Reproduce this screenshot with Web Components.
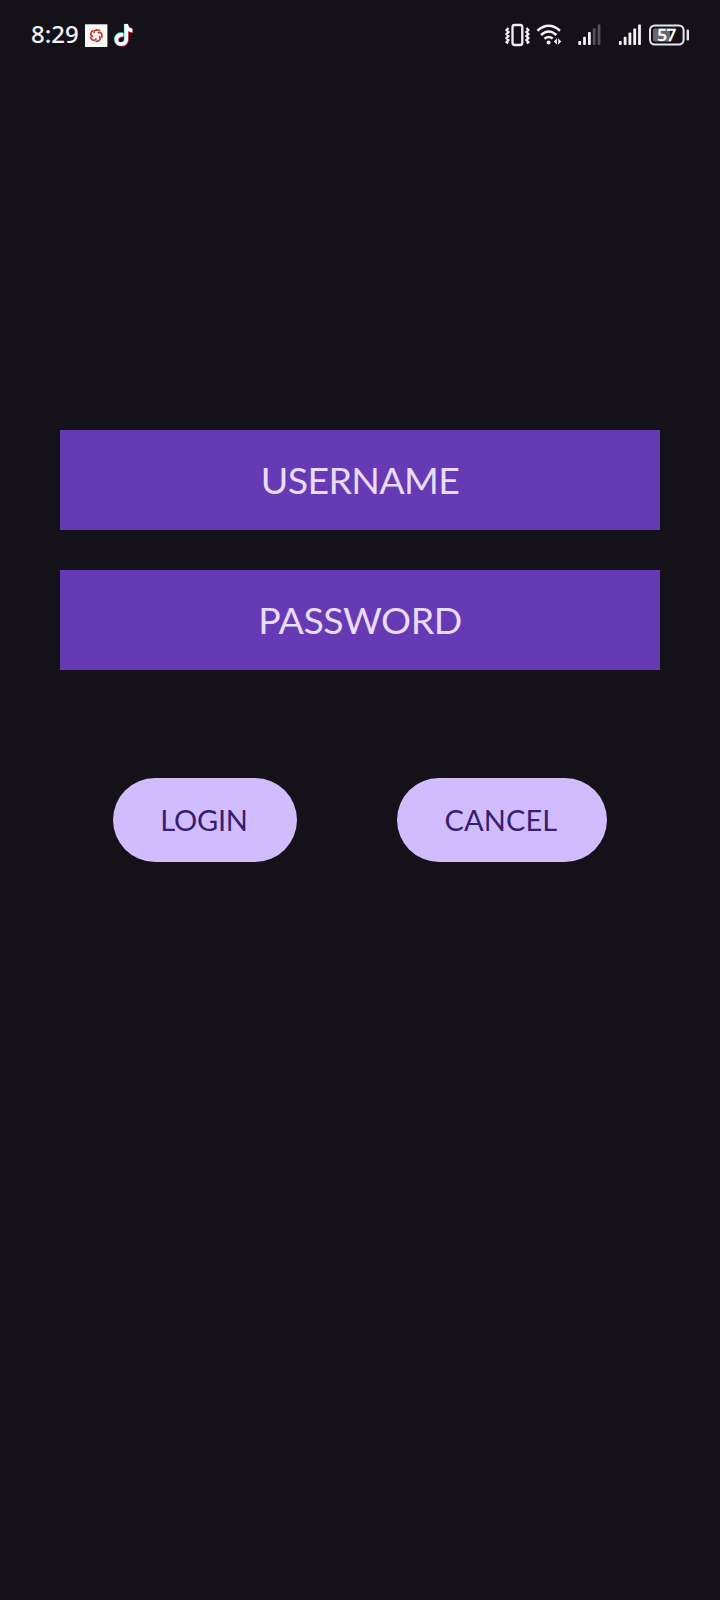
<!DOCTYPE html>
<html lang="en">
<head>
<meta charset="utf-8">
<title>Login</title>
<style>
html,body{margin:0;background:#141118}
</style>
</head>
<body>
<login-screen></login-screen>
<script>
const define = (name, markup) => {
  const t = document.createElement('template');
  t.innerHTML = markup;
  customElements.define(name, class extends HTMLElement {
    constructor() {
      super();
      this.attachShadow({mode: 'open'}).append(t.content.cloneNode(true));
    }
  });
};

define('status-clock', `<style>
:host{display:block;width:53px;padding-bottom:2px;font:500 24px/28px "Noto Sans",sans-serif;color:#f3f1f5;white-space:nowrap}
</style><slot></slot>`);

define('notification-icons', `<style>:host{display:block;height:30px}svg{display:block}</style>
<svg width="54" height="30" viewBox="84 20 54 30">
<rect x="85" y="24.3" width="22.4" height="22.7" fill="#fdfafa"/>
<g fill="none" stroke="#c23a35" stroke-width="1.7">
<path id="petal" d="M94.2 33.2q-.3-3.2 2.6-3.4q2.2 0 3.4 1.4"/>
<use href="#petal" transform="rotate(72 96.2 35.5)"/><use href="#petal" transform="rotate(144 96.2 35.5)"/>
<use href="#petal" transform="rotate(216 96.2 35.5)"/><use href="#petal" transform="rotate(288 96.2 35.5)"/></g>
<g fill="none" stroke-width="3.5">
<path stroke="#39dfdf" d="M122.6 34.1c-4-.6-6.9 1.6-6.9 4.9s2.5 4.8 4.9 4.8c3 0 5-2 5-5V24c.3 3.5 2.5 5.7 6 6"/>
<path stroke="#f33b62" d="M124 35.5c-4-.6-6.9 1.6-6.9 4.9s2.5 4.4 4.9 4.4c3 0 5-2 5-5V25.3c.3 3.5 2.5 5.7 6 6"/>
<path stroke="#fff" d="M123.3 34.8c-4-.6-6.9 1.6-6.9 4.9s2.5 4.4 4.9 4.4c3 0 5-2 5-5V24.1c.3 3.7 2.5 6 6 6.3"/>
</g></svg>`);

define('vibrate-icon', `<style>:host{display:block}svg{display:block}</style>
<svg width="28" height="30" viewBox="504 20 28 30" fill="none" stroke="#f3f1f5">
<rect x="512.5" y="25" width="9.8" height="20" rx="2.2" stroke-width="2.3"/>
<path stroke-width="2.2" d="M508.5 28l-2 2.1 2 2-2 2 2 2-2 2 2 2-2 2 1.6 1.4M526.4 28l2 2.1-2 2 2 2-2 2 2 2-2 2 2 2-1.6 1.4"/></svg>`);

define('wifi-icon', `<style>:host{display:block}svg{display:block}</style>
<svg width="28" height="30" viewBox="535 20 28 30" fill="none" stroke="#f3f1f5" stroke-width="2.5">
<path d="M537.4 30.7Q548.7 20.7 560 30.7M541 35q7.7-6.9 15.4 0M544.5 38.8q4.2-3.4 8.2-.2"/>
<circle cx="548.6" cy="42.4" r="2" fill="#f3f1f5" stroke="none"/>
<path stroke="none" fill="#f3f1f5" d="M556.9 38.3v6.4l-3-3.2zM558.2 38.3v6.4l3-3.2z"/></svg>`);

define('signal-one', `<style>:host{display:block}svg{display:block}</style>
<svg width="26" height="30" viewBox="576 20 26 30" fill="#f3f1f5">
<rect x="578.3" y="41" width="2.8" height="4" rx=".8"/><rect x="583.1" y="36.8" width="2.8" height="8.2" rx=".8"/><rect x="588" y="32" width="2.8" height="13" rx=".8"/>
<g fill="#555259"><rect x="592.8" y="28.2" width="2.8" height="16.8" rx=".8"/><rect x="597.6" y="24.6" width="2.8" height="20.4" rx=".8"/></g></svg>`);

define('signal-two', `<style>:host{display:block}svg{display:block}</style>
<svg width="26" height="30" viewBox="617 20 26 30" fill="#f3f1f5">
<rect x="618.9" y="41" width="2.8" height="4" rx=".8"/><rect x="623.7" y="36.8" width="2.8" height="8.2" rx=".8"/><rect x="628.5" y="32.4" width="2.8" height="12.6" rx=".8"/><rect x="633.3" y="28.4" width="2.8" height="16.6" rx=".8"/><rect x="638.1" y="24.4" width="2.8" height="20.6" rx=".8"/></svg>`);

define('battery-icon', `<style>:host{display:block}svg{display:block}text{font:500 17px "Noto Sans",sans-serif}</style>
<svg width="44" height="30" viewBox="647 20 44 30">
<rect x="650" y="25.4" width="33.6" height="19.2" rx="4.8" fill="none" stroke="#e9e6ec" stroke-width="2"/>
<path d="M655 28.4h15v13.2h-15q-2-.2-2-2v-9.2q0-2 2-2z" fill="#6a676e"/>
<rect x="686.6" y="29.6" width="2.4" height="10.8" rx="1" fill="#e9e6ec"/>
<text x="657.3" y="41" fill="#fff" stroke="#fff" stroke-width=".4" textLength="19">57</text></svg>`);

define('status-bar', `<style>
:host{display:flex;box-sizing:border-box;height:70px;padding:20px 29px 20px 31px;align-items:center}
.gap{flex:1}
wifi-icon{margin-left:3px}signal-one{margin-left:13px}signal-two{margin-left:15px}battery-icon{margin-left:4px}
</style><status-clock>8:29</status-clock><notification-icons></notification-icons><div class="gap"></div>
<vibrate-icon></vibrate-icon><wifi-icon></wifi-icon><signal-one></signal-one><signal-two></signal-two><battery-icon></battery-icon>`);

define('text-field', `<style>
:host{display:flex;box-sizing:border-box;height:100px;padding-bottom:1px;align-items:center;justify-content:center;background:#673ab5;color:#e9dcf8;font:400 37.5px/43px Lato,sans-serif;letter-spacing:var(--track,-.65px);white-space:nowrap}
</style><span><slot></slot></span>`);

define('pill-button', `<style>
:host{display:flex;box-sizing:border-box;height:84px;padding:0 2px 1px 0;border-radius:42px;align-items:center;justify-content:center;background:#d1bdfe;color:#381e72;font:400 29px/33px Lato,sans-serif;letter-spacing:var(--track,0);white-space:nowrap}
</style><span><slot></slot></span>`);

define('login-screen', `<style>
:host{display:flex;flex-direction:column;height:1600px;background:#141118}
.fields{display:grid;gap:40px;margin:360px 60px 0}
.password{--track:-.45px}
.actions{display:flex;gap:100px;margin:108px 0 0 113px}
.login{width:184px;--track:-.25px}.cancel{width:210px;--track:.1px}
</style><status-bar></status-bar>
<div class="fields"><text-field>USERNAME</text-field><text-field class="password">PASSWORD</text-field></div>
<div class="actions"><pill-button class="login">LOGIN</pill-button><pill-button class="cancel">CANCEL</pill-button></div>`);
</script>
</body>
</html>
